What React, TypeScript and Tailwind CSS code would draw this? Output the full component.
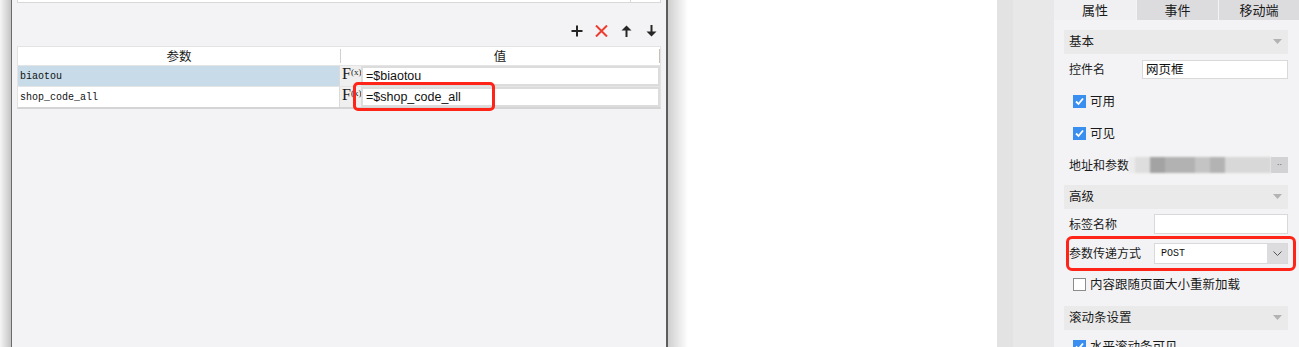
import React from "react";

// Font stacks
const cjk = "font-['Noto_Sans_CJK_SC',sans-serif]";
const mono = "font-['Liberation_Mono',monospace]";

// Toolbar icons
const PlusIcon = () => (
  <svg width="12" height="12" viewBox="0 0 12 12">
    <path d="M6 0.5v11M0.5 6h11" stroke="#262626" strokeWidth="2" />
  </svg>
);

const CrossIcon = () => (
  <svg width="13" height="12" viewBox="0 0 13 12">
    <path d="M1 0.5l11 11M12 0.5l-11 11" stroke="#ec3b2f" strokeWidth="2" />
  </svg>
);

const UpIcon = () => (
  <svg width="11" height="12" viewBox="0 0 11 12">
    <path d="M5.5 0.5L10.5 5.5H0.5Z" fill="#262626" />
    <path d="M5.5 4v8" stroke="#262626" strokeWidth="2" />
  </svg>
);

const DownIcon = () => (
  <svg width="11" height="12" viewBox="0 0 11 12">
    <path d="M5.5 11.5L10.5 6.5H0.5Z" fill="#262626" />
    <path d="M5.5 0v8" stroke="#262626" strokeWidth="2" />
  </svg>
);

// F(x) formula marker
const Fx = () => (
  <span className="flex items-start font-['Liberation_Serif',serif] text-[#1a1a1a] leading-none pl-[2px]">
    <span className="text-[16px]">F</span>
    <span className="text-[9px] mt-[2px]">(x)</span>
  </span>
);

type Row = { name: string; value: string; selected?: boolean };

const rows: Row[] = [
  { name: "biaotou", value: "=$biaotou", selected: true },
  { name: "shop_code_all", value: "=$shop_code_all" },
];

// Checkbox
const Check = ({ checked, label }: { checked: boolean; label: string }) => (
  <div className="flex items-center gap-[4px] pl-[9px] h-[13px]">
    {checked ? (
      <span className="w-[13px] h-[13px] bg-[#3a8ef0] flex items-center justify-center">
        <svg width="11" height="11" viewBox="0 0 11 11">
          <path d="M2 5.5l2.5 2.5L9 2.5" stroke="#fff" strokeWidth="1.8" fill="none" />
        </svg>
      </span>
    ) : (
      <span className="w-[13px] h-[13px] bg-white border border-[#8c8c8c]" />
    )}
    <span className={`${cjk} text-[12.5px] text-[#1a1a1a] leading-none`}>{label}</span>
  </div>
);

// Collapsible section header
const Section = ({ title, className }: { title: string; className: string }) => (
  <div className={`h-[24px] bg-[#eaeaea] flex items-center justify-between pl-[5px] pr-[6px] ${className}`}>
    <span className={`${cjk} text-[12.5px] text-[#1a1a1a]`}>{title}</span>
    <svg width="9" height="5" viewBox="0 0 9 5">
      <path d="M0 0H9L4.5 5Z" fill="#b3b3b3" />
    </svg>
  </div>
);

const App = () => {
  return (
    <div className="relative w-[1299px] h-[347px] overflow-hidden flex bg-white">
      {/* Dialog shadow */}
      <div className="w-[11px] h-full bg-linear-to-r from-[#f6f6f6] to-[#c4c4c4]" />

      {/* Parameter dialog */}
      <div className="w-[657px] h-full bg-[#f3f3f5] border-l border-[#6b6b6b] border-r-2 border-r-[#5c5c5c] flex flex-col px-[5px]">
        <div className="h-[3px] w-full bg-white border-x border-b border-[#d8d8d8] flex justify-end">
          <div className="w-[30px] h-full border-l border-[#d8d8d8]" />
        </div>

        {/* Toolbar */}
        <div className="h-[43px] flex items-end justify-end pb-[9px] pr-[4px]">
          <div className="flex items-center">
            <PlusIcon />
            <span className="ml-[12px]">
              <CrossIcon />
            </span>
            <span className="ml-[13px]">
              <UpIcon />
            </span>
            <span className="ml-[14px]">
              <DownIcon />
            </span>
          </div>
        </div>

        {/* Table */}
        <div className="w-[644px] border-x border-[#e3e3e3] border-b-2 border-b-[#d4d4d4] bg-white">
          <div className="h-[19px] flex items-center border-t border-[#e3e3e3]">
            <div className={`w-[322px] text-center ${cjk} text-[12.5px] text-[#1a1a1a]`}>参数</div>
            <div className="w-px h-[14px] bg-[#d0d0d0]" />
            <div className={`flex-1 text-center ${cjk} text-[12.5px] text-[#1a1a1a]`}>值</div>
            <div className="w-px h-[14px] bg-[#c9c2b4]" />
          </div>
          {rows.map((r) => (
            <div key={r.name} className="h-[21px] flex border-t border-[#e4e4e4] bg-[#f1f1f1]">
              <div
                className={`w-[322px] h-full flex items-center pl-[2px] ${mono} text-[10px] text-[#111] ${
                  r.selected ? "bg-[#c8dbe8]" : "bg-white"
                } border-r border-[#dadada]`}
              >
                {r.name}
              </div>
              <div className="w-[21px] h-full bg-[#efefef] overflow-hidden">
                <Fx />
              </div>
              <div className="flex-1 h-full bg-white border-2 border-[#dcdcdc] flex items-center pl-[3px] font-['Liberation_Sans',sans-serif] text-[12.5px] text-[#111]">
                {r.value}
              </div>
            </div>
          ))}
        </div>
      </div>

      {/* Right shadow and canvas */}
      <div className="w-[20px] h-full bg-linear-to-r from-[#cfcfcf] to-white" />
      <div className="flex-1 h-full bg-white" />
      <div className="w-[16px] h-full bg-[#e3e3e3]" />
      <div className="w-[41px] h-full bg-[#e8e8e8]" />

      {/* Property panel */}
      <div className="w-[245px] h-full bg-[#f3f3f5] flex flex-col">
        <div className={`h-[20px] flex ${cjk} text-[13px] text-[#1a1a1a]`}>
          <div className="w-[82px] flex items-center justify-center bg-[#f0f0f2]">属性</div>
          <div className="w-[81px] ml-px flex items-center justify-center bg-[#dcdcdf]">事件</div>
          <div className="flex-1 ml-px flex items-center justify-center bg-[#dcdcdf]">移动端</div>
        </div>

        <div className="flex flex-col pl-[10px] pr-[11px]">
          <Section title="基本" className="mt-[10px]" />

          <div className="mt-[6px] h-[19px] flex items-center">
            <span className={`w-[78px] pl-[5px] ${cjk} text-[12px] text-[#1a1a1a]`}>控件名</span>
            <div className={`flex-1 h-full bg-white border border-[#d9d9d9] flex items-center pl-[3px] ${cjk} text-[12.5px] text-[#111]`}>
              网页框
            </div>
          </div>

          <div className="mt-[16px]">
            <Check checked label="可用" />
          </div>
          <div className="mt-[19px]">
            <Check checked label="可见" />
          </div>

          {/* Address with blurred value */}
          <div className="mt-[17px] h-[16px] flex items-center">
            <span className={`shrink-0 w-[65px] pl-[5px] ${cjk} text-[12px] text-[#1a1a1a] whitespace-nowrap`}>地址和参数</span>
            <div className="flex-1 h-full flex blur-[1px]">
              <div className="w-[6px] bg-[#ececec]" />
              <div className="w-[15px] bg-[#dedede]" />
              <div className="w-[15px] bg-[#a3a3a3]" />
              <div className="w-[30px] bg-[#b2b2b2]" />
              <div className="w-[15px] bg-[#c4c4c4]" />
              <div className="w-[15px] bg-[#b3b3b3]" />
              <div className="flex-1 bg-[#d9d8d8]" />
            </div>
            <div className="w-[17px] h-full bg-[#d2d2d5] flex items-center justify-center text-[#7a7a7a] text-[9px] leading-none">
              ··
            </div>
          </div>

          <Section title="高级" className="mt-[12px]" />

          <div className="mt-[5px] h-[20px] flex items-center">
            <span className={`w-[90px] pl-[5px] ${cjk} text-[12px] text-[#1a1a1a]`}>标签名称</span>
            <div className="flex-1 h-full bg-white border border-[#d9d9d9]" />
          </div>

          <div className="mt-[9px] h-[21px] flex items-center">
            <span className={`w-[90px] pl-[5px] ${cjk} text-[12px] text-[#1a1a1a] whitespace-nowrap`}>参数传递方式</span>
            <div className="flex-1 h-full bg-white border border-[#d9d9d9] flex">
              <div className={`flex-1 flex items-center pl-[6px] ${mono} text-[10px] text-[#111]`}>POST</div>
              <div className="w-[20px] h-full bg-[#dcdcdf] flex items-center justify-center">
                <svg width="9" height="5" viewBox="0 0 9 5">
                  <path d="M0.5 0.5L4.5 4.5L8.5 0.5" stroke="#555" strokeWidth="1" fill="none" />
                </svg>
              </div>
            </div>
          </div>

          <div className="mt-[14px]">
            <Check checked={false} label="内容跟随页面大小重新加载" />
          </div>

          <Section title="滚动条设置" className="mt-[15px]" />

          <div className="mt-[10px]">
            <Check checked label="水平滚动条可见" />
          </div>
        </div>
      </div>

      {/* Red annotation boxes */}
      <div className="absolute left-[353px] top-[82px] w-[142px] h-[29px] border-[3px] border-[#ff2418] rounded-[5px]" />
      <div className="absolute left-[1066px] top-[236px] w-[230px] h-[35px] border-[3px] border-[#ff2418] rounded-[6px]" />
    </div>
  );
};

export default App;
